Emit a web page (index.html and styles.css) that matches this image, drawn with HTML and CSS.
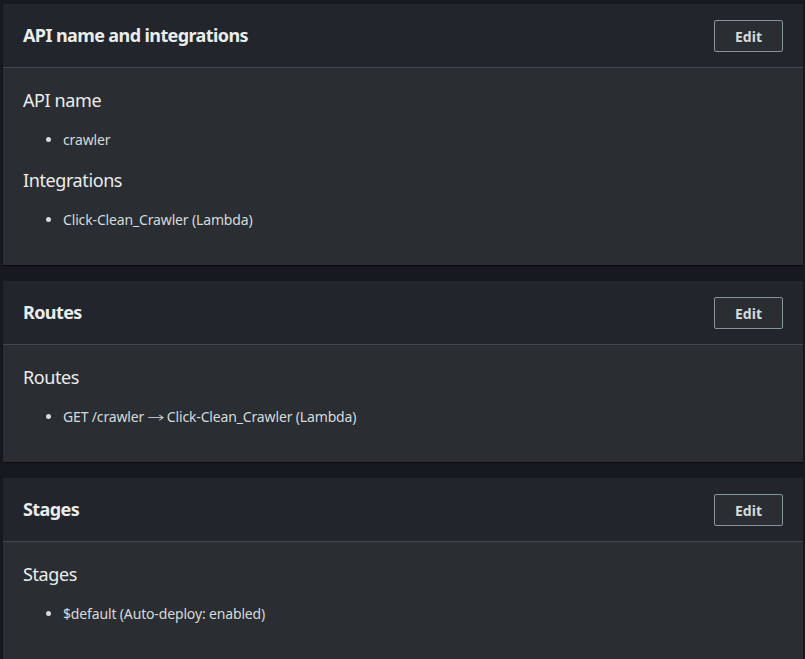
FILE: index.html
```html
<!DOCTYPE html>
<html>
<head>
<meta charset="utf-8">
<link rel="stylesheet" href="styles.css">
</head>
<body>
<section class="card">
  <div class="card-header">
    <h2 class="card-title">API name and integrations</h2>
    <button class="btn">Edit</button>
  </div>
  <div class="card-body">
    <h3 class="field-label">API name</h3>
    <ul class="field-list"><li>crawler</li></ul>
    <h3 class="field-label">Integrations</h3>
    <ul class="field-list"><li>Click-Clean_Crawler (Lambda)</li></ul>
  </div>
</section>
<section class="card">
  <div class="card-header">
    <h2 class="card-title">Routes</h2>
    <button class="btn">Edit</button>
  </div>
  <div class="card-body">
    <h3 class="field-label">Routes</h3>
    <ul class="field-list"><li>GET /crawler <span class="arrow">→</span> Click-Clean_Crawler (Lambda)</li></ul>
  </div>
</section>
<section class="card">
  <div class="card-header">
    <h2 class="card-title">Stages</h2>
    <button class="btn">Edit</button>
  </div>
  <div class="card-body">
    <h3 class="field-label">Stages</h3>
    <ul class="field-list"><li>$default (Auto-deploy: enabled)</li></ul>
  </div>
</section>
</body>
</html>
```

FILE: styles.css
```css
html, body {
  margin: 0;
  background: #16191f;
}
body {
  padding: 4px 2px 0 3px;
  font-family: "Noto Sans", "Open Sans", sans-serif;
  color: #d5dbdb;
}
.card {
  background: #2a2d32;
  margin-bottom: 16px;
  box-shadow: 0 1px 1px rgba(0,0,0,0.5);
}
.card-header {
  display: flex;
  align-items: center;
  justify-content: space-between;
  background: #22252b;
  padding: 15px 20px 16px 20px;
  border-bottom: 1px solid #414750;
}
.card-title {
  margin: 0;
  font-size: 18px;
  font-weight: 700;
  line-height: 22px;
  letter-spacing: -0.6px;
  color: #eaeded;
}
.btn {
  width: 69px;
  height: 32px;
  margin-top: 1px;
  margin-bottom: -1px;
  background: #2a2e33;
  border: 1px solid #879596;
  border-radius: 2px;
  color: #d5dbdb;
  font-family: inherit;
  font-size: 14px;
  font-weight: 700;
  padding: 0;
}
.card-body {
  padding: 20px 20px 17px 20px;
}
.field-label {
  margin: 0;
  font-size: 18px;
  font-weight: 400;
  line-height: 24px;
  letter-spacing: -0.4px;
  color: #eaeded;
}
.field-list {
  margin: 18px 0 18px 0;
  padding-left: 40px;
  font-size: 14px;
  line-height: 20px;
  letter-spacing: -0.15px;
  color: #d5dbdb;
}
.arrow {
  font-family: "DejaVu Sans", sans-serif;
  font-weight: 300;
  display: inline-block;
  transform: scaleX(1.5);
  margin: 0 2px;
}
```
